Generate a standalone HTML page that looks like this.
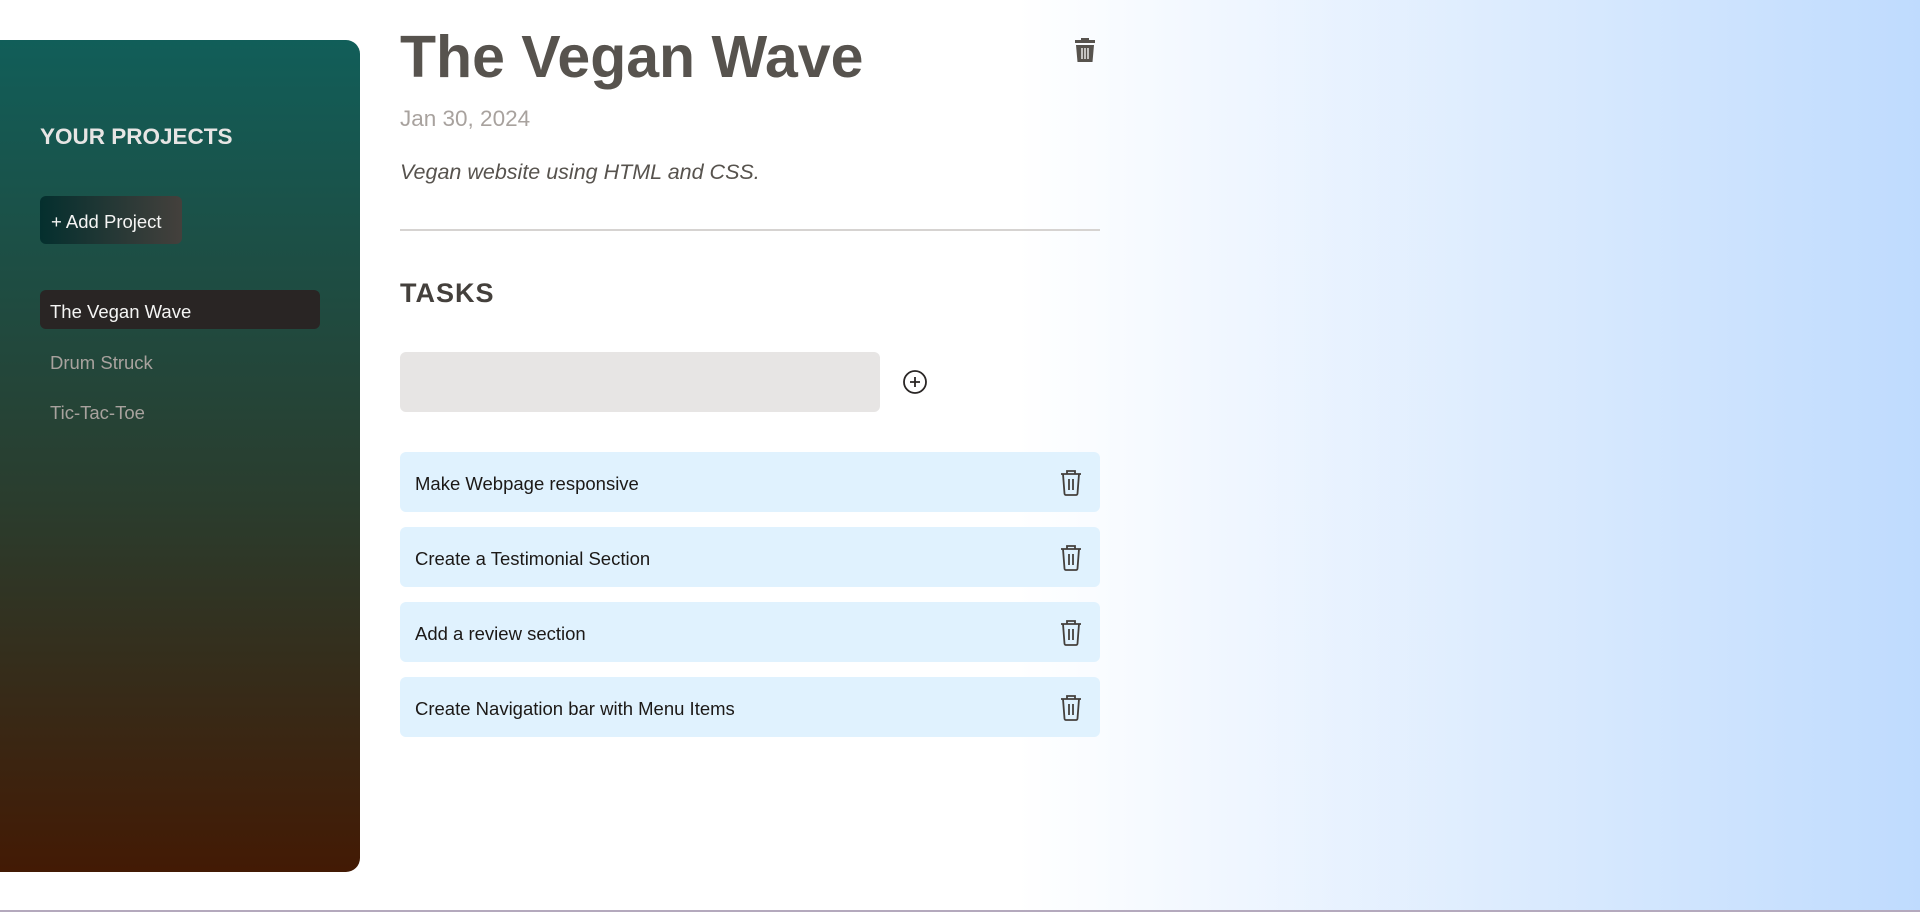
<!DOCTYPE html>
<html><head><meta charset="utf-8"><style>
*{box-sizing:border-box;margin:0;padding:0}
body{width:1920px;height:912px;overflow:hidden;font-family:"Segoe UI","Liberation Sans",sans-serif;background:linear-gradient(to right,#fff 0%,#fff 53%,#bfdbfe 100%);position:relative}
.side{position:absolute;left:0;top:40px;width:360px;height:832px;border-radius:0 14px 14px 0;background:linear-gradient(to bottom,#115e59,#2a3d2e 55%,#431a04)}
.side h2{position:absolute;left:40px;font-size:22.5px;font-weight:bold;color:#e7e5e4}
.add{position:absolute;left:40px;width:142px;height:48px;border-radius:6px;background:linear-gradient(to right,#042f2e,#44403c);color:#f5f5f4;font-size:18.5px;line-height:52px;padding-left:11px}
.item{position:absolute;left:40px;width:280px;height:39px;line-height:43px;padding-left:10px;font-size:18.5px;color:#a8a29e;border-radius:6px}
.sel{background:#292524;color:#f5f5f4}
.t{position:absolute;left:400px}
h1{font-size:59px;font-weight:bold;color:#57534e;top:17px;line-height:80px}
.date{top:106px;font-size:22.5px;color:#a8a29e}
.desc{top:160px;font-size:21.5px;color:#57534e;font-style:italic}
.hr{top:229px;width:700px;height:2px;background:#d6d3d1}
.tasks{top:278px;font-size:27px;font-weight:bold;color:#44403c;letter-spacing:1px}
.inp{top:352px;width:480px;height:60px;background:#e7e5e4;border-radius:6px}
.task{left:400px;position:absolute;width:700px;height:60px;background:#e0f2fe;border-radius:6px;font-size:18.5px;color:#1c1917;line-height:64px;padding-left:15px}
.task svg{position:absolute;right:17px;top:17px}
</style></head><body>
<div class="side">
<h2 style="top:84px">YOUR PROJECTS</h2>
<div class="add" style="top:156px">+ Add Project</div>
<div class="item sel" style="top:250px">The Vegan Wave</div>
<div class="item" style="top:301px">Drum Struck</div>
<div class="item" style="top:351px">Tic-Tac-Toe</div>
</div>
<h1 class="t">The Vegan Wave</h1>
<svg style="position:absolute;left:1073px;top:37px" width="24" height="26" viewBox="0 0 24 26"><path d="M8 3V1h8v2h6v3H2V3z" fill="#57534e"/><path d="M3 8h18l-1.5 17h-15z" fill="#57534e"/><path d="M9 11v11M12 11v11M15 11v11" stroke="#fff" stroke-width="1.3"/></svg>
<div class="t date">Jan 30, 2024</div>
<div class="t desc">Vegan website using HTML and CSS.</div>
<div class="t hr"></div>
<div class="t tasks">TASKS</div>
<div class="t inp"></div>
<svg style="position:absolute;left:902px;top:369px" width="26" height="26" viewBox="0 0 26 26"><circle cx="13" cy="13" r="11" fill="none" stroke="#292524" stroke-width="1.8"/><path d="M13 8v10M8 13h10" stroke="#292524" stroke-width="1.8"/></svg>
<div class="task" style="top:452px">Make Webpage responsive<svg width="24" height="27" viewBox="0 0 24 27" fill="none" stroke="#44403c" stroke-width="1.8"><path d="M2 5h20M8 5V2h8v3M4 5l1.5 19.5a1.5 1.5 0 0 0 1.5 1.5h10a1.5 1.5 0 0 0 1.5-1.5L20 5M10 10v11M14 10v11"/></svg></div>
<div class="task" style="top:527px">Create a Testimonial Section<svg width="24" height="27" viewBox="0 0 24 27" fill="none" stroke="#44403c" stroke-width="1.8"><path d="M2 5h20M8 5V2h8v3M4 5l1.5 19.5a1.5 1.5 0 0 0 1.5 1.5h10a1.5 1.5 0 0 0 1.5-1.5L20 5M10 10v11M14 10v11"/></svg></div>
<div class="task" style="top:602px">Add a review section<svg width="24" height="27" viewBox="0 0 24 27" fill="none" stroke="#44403c" stroke-width="1.8"><path d="M2 5h20M8 5V2h8v3M4 5l1.5 19.5a1.5 1.5 0 0 0 1.5 1.5h10a1.5 1.5 0 0 0 1.5-1.5L20 5M10 10v11M14 10v11"/></svg></div>
<div class="task" style="top:677px">Create Navigation bar with Menu Items<svg width="24" height="27" viewBox="0 0 24 27" fill="none" stroke="#44403c" stroke-width="1.8"><path d="M2 5h20M8 5V2h8v3M4 5l1.5 19.5a1.5 1.5 0 0 0 1.5 1.5h10a1.5 1.5 0 0 0 1.5-1.5L20 5M10 10v11M14 10v11"/></svg></div>
<div style="position:absolute;left:0;top:910px;width:1920px;height:2px;background:#b4a9bd"></div>
</body></html>
